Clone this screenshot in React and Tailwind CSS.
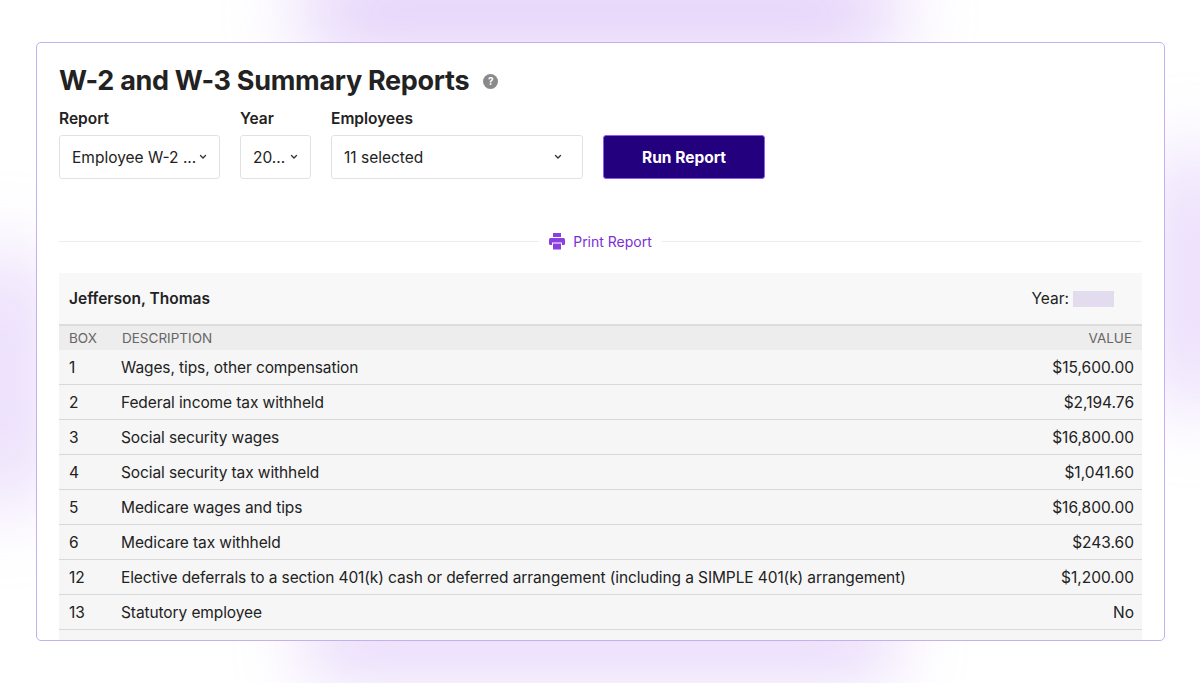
import React from "react";

const rows = [
  ["1", "Wages, tips, other compensation", "$15,600.00"],
  ["2", "Federal income tax withheld", "$2,194.76"],
  ["3", "Social security wages", "$16,800.00"],
  ["4", "Social security tax withheld", "$1,041.60"],
  ["5", "Medicare wages and tips", "$16,800.00"],
  ["6", "Medicare tax withheld", "$243.60"],
  ["12", "Elective deferrals to a section 401(k) cash or deferred arrangement (including a SIMPLE 401(k) arrangement)", "$1,200.00"],
  ["13", "Statutory employee", "No"],
  ["", "", ""],
];

const Chevron = () => (
  <svg width="8" height="6" viewBox="0 0 8 6" className="shrink-0">
    <path d="M1.5 1.5 L4 4 L6.5 1.5" fill="none" stroke="#333" strokeWidth="1.3" strokeLinecap="round" />
  </svg>
);

export default function App() {
  return (
    <div className="relative w-[1200px] h-[683px] bg-white overflow-hidden" style={{ fontFamily: "Inter, 'Noto Sans', sans-serif" }}>
      <div className="absolute left-[300px] top-[-30px] w-[600px] h-[80px] rounded-full bg-[#c9a5f5] blur-[40px] opacity-60" />
      <div className="absolute left-[300px] top-[620px] w-[600px] h-[50px] rounded-full bg-[#c9a5f5] blur-[35px] opacity-60" />
      <div className="absolute left-[-30px] top-[250px] w-[70px] h-[260px] rounded-full bg-[#c9a5f5] blur-[40px] opacity-50" />
      <div className="absolute left-[1160px] top-[150px] w-[70px] h-[260px] rounded-full bg-[#c9a5f5] blur-[40px] opacity-50" />
      <div className="relative ml-[36px] mt-[42px] w-[1129px] h-[599px] bg-white border border-[#c4b0f0] rounded-[5px] overflow-hidden px-[22px] pt-[22px]">
        <div className="flex items-center gap-[14px] h-[32px]">
          <h1 className="text-[27px] font-bold text-[#222] tracking-[-0.3px]">W-2 and W-3 Summary Reports</h1>
          <span className="w-[15px] h-[15px] rounded-full bg-[#8a8a8a] text-white text-[10px] font-bold flex items-center justify-center">?</span>
        </div>
        <div className="flex items-end gap-[20px] mt-[10px] text-[15.5px]">
          <div>
            <div className="font-semibold text-[#222] mb-[5px]">Report</div>
            <div className="w-[161px] h-[44px] border border-[#e2e2e2] rounded-[3px] flex items-center justify-between px-[12px] text-[#222] whitespace-nowrap">Employee W-2 ...<Chevron /></div>
          </div>
          <div>
            <div className="font-semibold text-[#222] mb-[5px]">Year</div>
            <div className="w-[71px] h-[44px] border border-[#e2e2e2] rounded-[3px] flex items-center justify-between px-[12px] text-[#222]">20...<Chevron /></div>
          </div>
          <div>
            <div className="font-semibold text-[#222] mb-[5px]">Employees</div>
            <div className="w-[252px] h-[44px] border border-[#e2e2e2] rounded-[3px] flex items-center justify-between pl-[12px] pr-[20px] text-[#222]">11 selected<Chevron /></div>
          </div>
          <button className="w-[162px] h-[44px] bg-[#23007e] border border-[#8b5cf6] rounded-[3px] text-white font-bold">Run Report</button>
        </div>
        <div className="flex items-center mt-[52px] h-[20px]">
          <div className="flex-1 h-px bg-[#ececec]" />
          <div className="flex items-center gap-[8px] px-[10px] text-[14px] text-[#7c2fd6]">
            <svg width="16" height="17" viewBox="0 0 16 17"><rect x="4" y="0" width="8" height="4" fill="#8b3fe0"/><rect x="0" y="5" width="16" height="7" rx="1.5" fill="#8b3fe0"/><rect x="3.5" y="10" width="9" height="7" fill="#8b3fe0" stroke="#fff" strokeWidth="1"/></svg>
            Print Report
          </div>
          <div className="flex-1 h-px bg-[#ececec]" />
        </div>
        <div className="mt-[22px] bg-[#f8f8f9]">
          <div className="h-[51px] flex items-center justify-between px-[10px] text-[15.5px] text-[#222]">
            <span className="font-semibold">Jefferson, Thomas</span>
            <span className="flex items-center gap-[4px] pr-[18px]">Year: <span className="w-[41px] h-[16px] bg-[#e2dcee]" /></span>
          </div>
          <div className="border-t-2 border-[#dcdcdc] bg-[#ededed] h-[26px] flex items-center text-[13.5px] text-[#666] px-[10px]">
            <span className="w-[53px]">BOX</span>
            <span className="flex-1">DESCRIPTION</span>
            <span>VALUE</span>
          </div>
          {rows.map((r, i) => (
            <div key={i} className="h-[35px] flex items-center border-b border-[#d8d8d8] bg-[#f6f6f6] text-[15.5px] text-[#222] pl-[10px] pr-[8px]">
              <span className="w-[52px]">{r[0]}</span>
              <span className="flex-1 tracking-[-0.1px]">{r[1]}</span>
              <span>{r[2]}</span>
            </div>
          ))}
        </div>
      </div>
    </div>
  );
}
